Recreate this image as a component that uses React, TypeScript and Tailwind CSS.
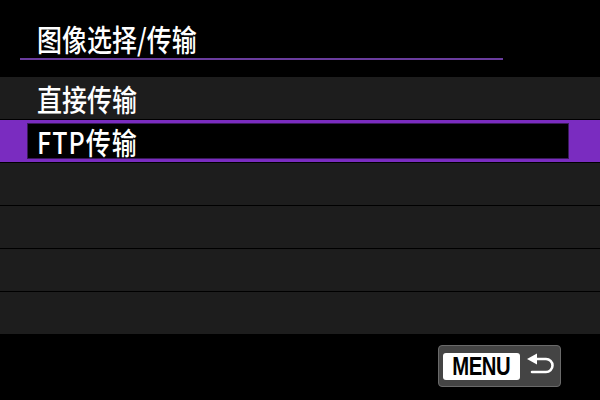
import React from 'react';

const font = { fontFamily: '"Noto Sans CJK SC", "Noto Sans", sans-serif' };

function Row({ label, selected }: { label?: string; selected?: boolean }) {
  if (selected) {
    return (
      <div className="h-[42px] bg-[#7a2cc0] flex">
        <div className="ml-[27px] mr-[31px] my-[3px] flex-1 bg-black border border-[#3a1a5a] flex items-center pl-[9px]">
          <span className="text-white text-[25px] font-medium leading-none scale-y-[1.2] tracking-[1px]">{label}</span>
        </div>
      </div>
    );
  }
  return (
    <div className="h-[42px] bg-[#1d1d1d] flex items-center pl-[37px]">
      {label && <span className="text-white text-[25px] font-medium leading-none scale-y-[1.2]">{label}</span>}
    </div>
  );
}

function ReturnArrow() {
  return (
    <svg width="30" height="26" viewBox="0 0 30 26" fill="none">
      <path d="M10 6 H20 A6.5 6.5 0 0 1 20 19 H6" stroke="white" strokeWidth="2.6" strokeLinecap="round" />
      <path d="M1 6 L11 0.5 L11 11.5 Z" fill="white" />
    </svg>
  );
}

export default function App() {
  return (
    <div className="w-[600px] h-[400px] bg-black flex flex-col overflow-hidden" style={font}>
      {/* Title */}
      <div className="h-[58px] flex items-end pl-[37px] pb-[7px]">
        <span className="text-white text-[25px] font-medium leading-none scale-y-[1.2]">图像选择/传输</span>
      </div>
      <div className="ml-[20px] w-[483px] h-[2px] bg-[#6a3c9e]" />

      {/* List */}
      <div className="mt-[17px] flex flex-col gap-px">
        <Row label="直接传输" />
        <Row label="FTP传输" selected />
        <Row />
        <Row />
        <Row />
        <Row />
      </div>

      {/* Footer */}
      <div className="flex justify-end pr-[39px] mt-[11px]">
        <div className="w-[123px] h-[42px] rounded-[4px] bg-[#444] border border-[#6a6a6a] flex items-center pl-[4px] gap-[6px]">
          <div className="w-[77px] h-[27px] bg-white rounded-[3px] flex items-center justify-center overflow-hidden">
            <span
              className="text-black text-[26px] font-bold leading-none scale-x-[0.78] tracking-[-0.5px]"
              style={{ fontFamily: '"Liberation Sans", Arial, sans-serif' }}
            >
              MENU
            </span>
          </div>
          <ReturnArrow />
        </div>
      </div>
    </div>
  );
}
